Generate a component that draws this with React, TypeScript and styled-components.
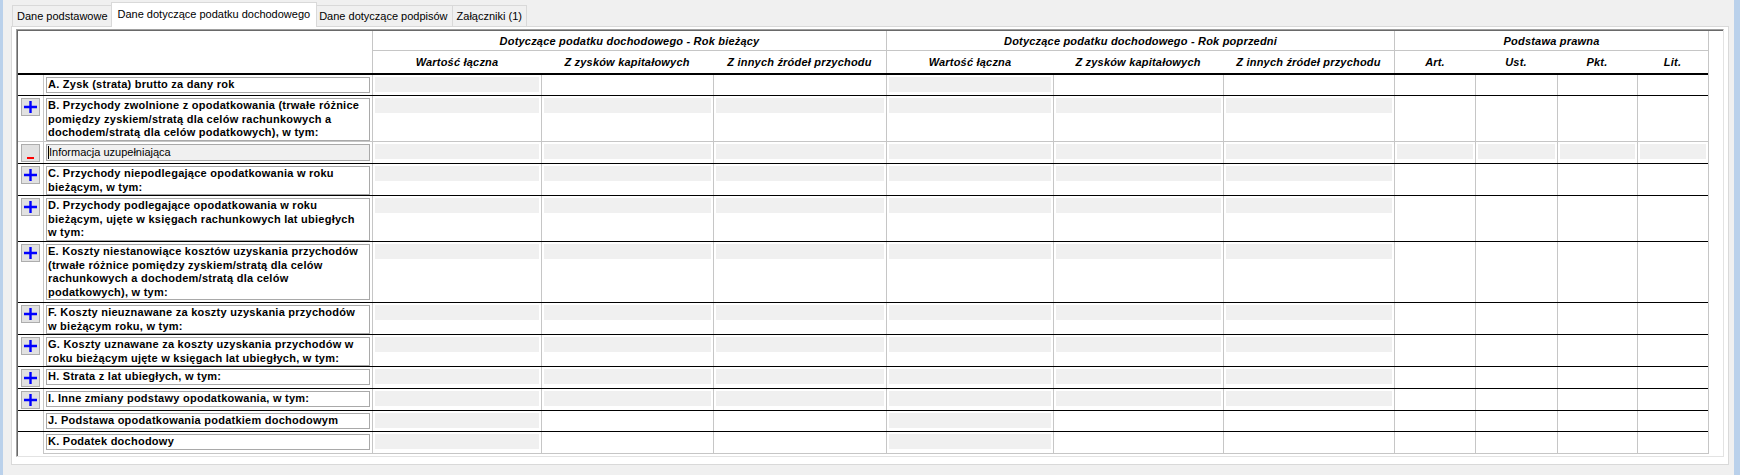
import * as React from "react";
import styled, {createGlobalStyle, css} from "styled-components";

const FONT = `"Liberation Sans", Arial, sans-serif`;
const GRID = "#c6c6c6";
const COLS = "25px 329px 169px 172px 173px 167px 170px 171px 81px 82px 80px 71px";

const GlobalStyle = createGlobalStyle`
	*, *::before, *::after {
		box-sizing: border-box;
	}
	html, body {
		margin: 0;
		height: 475px;
		overflow: hidden;
		background: #f0f0f0;
		font-family: ${FONT};
		font-size: 11px;
		color: #000;
	}
`;

const Window = styled.div`
	display: flex;
	height: 475px;
	background: #f0f0f0;
`;

const Edge = styled.div<{$w: number}>`
	flex: none;
	width: ${(p) => p.$w}px;
	background: #bad1eb;
`;

const Content = styled.div`
	flex: 1;
	padding: 0 5px 0 8px;
`;

const TabBar = styled.div`
	display: flex;
	align-items: flex-end;
	height: 26px;
	padding-left: 2px;
`;

const Tab = styled.div<{$active?: boolean}>`
	height: 21px;
	padding: 0 4px;
	margin-left: -1px;
	border: 1px solid #d9d9d9;
	border-bottom: none;
	background: #f0f0f0;
	display: flex;
	align-items: center;
	white-space: nowrap;
	font-size: 11px;
	${(props) => props.$active && css`
		position: relative;
		z-index: 1;
		height: 25px;
		padding: 0 6px;
		margin: 0 -2px -1px -2px;
		background: #fff;
		padding-bottom: 2px;
	`}
`;

const Panel = styled.div`
	width: 1718px;
	height: 439px;
	border: 1px solid #d9d9d9;
	background: #fff;
	padding: 2px 4px 7px 4px;
`;

const Viewport = styled.div`
	height: 428px;
	border: 1px solid;
	border-color: #a0a0a0 #e3e3e3 #e3e3e3 #a0a0a0;
	box-shadow: inset 1px 1px 0 #696969;
	padding: 1px 0 0 1px;
	background: #fff;
	overflow: hidden;
`;

const Table = styled.div`
	width: 1691px;
	border-right: 1px solid ${GRID};
`;

const HeaderGrid = styled.div`
	display: grid;
	grid-template-columns: ${COLS};
	grid-template-rows: 20px 22px;
	border-bottom: 2px solid #000;
`;

const Corner = styled.div`
	grid-column: 1 / 3;
	grid-row: 1 / 3;
`;

const headText = css`
	display: flex;
	align-items: center;
	justify-content: center;
	font-style: italic;
	font-weight: 700;
	font-size: 11px;
	letter-spacing: 0.2px;
	white-space: nowrap;
`;

const GroupTitle = styled.div<{$from: number; $to: number}>`
	${headText};
	grid-row: 1;
	grid-column: ${(p) => p.$from} / ${(p) => p.$to};
	border-left: 1px solid ${GRID};
	border-bottom: 1px solid ${GRID};
`;

const SubTitle = styled.div<{$col: number; $first: boolean}>`
	${headText};
	grid-row: 2;
	grid-column: ${(p) => p.$col};
	border-left: ${(p) => (p.$first ? `1px solid ${GRID}` : "none")};
`;

const BodyRow = styled.div<{$h: number; $line: string}>`
	display: grid;
	grid-template-columns: ${COLS};
	height: ${(p) => p.$h}px;
	border-bottom: ${(p) => (p.$line === "none" ? "none" : `1px solid ${p.$line}`)};
`;

const ButtonCell = styled.div`
	padding: 2px 0 0 3px;
`;

const LabelCell = styled.div`
	border-left: 1px solid ${GRID};
	padding: 2px 2px 0 2px;
`;

const LabelBox = styled.div<{$info?: boolean}>`
	border: 1px solid #a9a9a9;
	background: #fff;
	padding: 0 1px;
	font-weight: 700;
	font-size: 11px;
	letter-spacing: 0.25px;
	line-height: 13.5px;
	white-space: pre;
	overflow: hidden;
	${(props) => props.$info && css`
		height: 17px;
		line-height: 15px;
		background: #f0f0f0;
		font-weight: 400;
		letter-spacing: 0;
	`}
`;

const Caret = styled.span`
	display: inline-block;
	width: 1px;
	height: 13px;
	background: #000;
	vertical-align: -3px;
`;

const ValueCell = styled.div`
	border-left: 1px solid ${GRID};
	padding: 2px 2px 0 2px;
`;

const InputField = styled.div`
	height: 15px;
	background: #f0f0f0;
`;

const ToggleButton = styled.div`
	width: 19px;
	height: 18px;
	border: 1px solid #adadad;
	background: #e1e1e1;
	display: flex;
	align-items: center;
	justify-content: center;
`;

const MinusButton = styled(ToggleButton)`
	align-items: flex-end;
	padding-bottom: 2px;
`;

const MinusBar = styled.div`
	width: 7px;
	height: 2px;
	background: #f00;
`;

const TableFoot = styled.div`
	margin-left: 25px;
	border-top: 1px solid ${GRID};
`;

const PlusButton = () => (
	<ToggleButton>
		<svg width="13" height="12" viewBox="0 0 13 12">
			<path d="M0 6H13M6.5 0V12" stroke="#0000ff" strokeWidth="2.4" fill="none"/>
		</svg>
	</ToggleButton>
);

interface IRow {
	label: string;
	h: number;
	btn?: "plus" | "minus";
	info?: boolean;
	line: string;
	fields: boolean[];
}

const FIRST = [true, false, false, true, false, false, false, false, false, false];
const SIX = [true, true, true, true, true, true, false, false, false, false];
const ALL = [true, true, true, true, true, true, true, true, true, true];

const rows: IRow[] = [
	{label: "A. Zysk (strata) brutto za dany rok", h: 21, line: "#000", fields: FIRST},
	{
		label: "B. Przychody zwolnione z opodatkowania (trwałe różnice\npomiędzy zyskiem/stratą dla celów rachunkowych a\ndochodem/stratą dla celów podatkowych), w tym:",
		h: 46, btn: "plus", line: GRID, fields: SIX,
	},
	{label: "Informacja uzupełniająca", h: 22, btn: "minus", info: true, line: "#000", fields: ALL},
	{label: "C. Przychody niepodlegające opodatkowania w roku\nbieżącym, w tym:", h: 32, btn: "plus", line: "#000", fields: SIX},
	{
		label: "D. Przychody podlegające opodatkowania w roku\nbieżącym, ujęte w księgach rachunkowych lat ubiegłych\nw tym:",
		h: 46, btn: "plus", line: "#000", fields: SIX,
	},
	{
		label: "E. Koszty niestanowiące kosztów uzyskania przychodów\n(trwałe różnice pomiędzy zyskiem/stratą dla celów\nrachunkowych a dochodem/stratą dla celów\npodatkowych), w tym:",
		h: 61, btn: "plus", line: "#000", fields: SIX,
	},
	{label: "F. Koszty nieuznawane za koszty uzyskania przychodów\nw bieżącym roku, w tym:", h: 32, btn: "plus", line: "#000", fields: SIX},
	{label: "G. Koszty uznawane za koszty uzyskania przychodów w\nroku bieżącym ujęte w księgach lat ubiegłych, w tym:", h: 32, btn: "plus", line: "#000", fields: SIX},
	{label: "H. Strata z lat ubiegłych, w tym:", h: 22, btn: "plus", line: "#000", fields: SIX},
	{label: "I. Inne zmiany podstawy opodatkowania, w tym:", h: 22, btn: "plus", line: "#000", fields: SIX},
	{label: "J. Podstawa opodatkowania podatkiem dochodowym", h: 21, line: "#000", fields: FIRST},
	{label: "K. Podatek dochodowy", h: 21, line: "none", fields: FIRST},
];

const groups = [
	{title: "Dotyczące podatku dochodowego - Rok bieżący", from: 3, subs: ["Wartość łączna", "Z zysków kapitałowych", "Z innych źródeł przychodu"]},
	{title: "Dotyczące podatku dochodowego - Rok poprzedni", from: 6, subs: ["Wartość łączna", "Z zysków kapitałowych", "Z innych źródeł przychodu"]},
	{title: "Podstawa prawna", from: 9, subs: ["Art.", "Ust.", "Pkt.", "Lit."]},
];

const tabs = ["Dane podstawowe", "Dane dotyczące podatku dochodowego", "Dane dotyczące podpisów", "Załączniki (1)"];

export const App = () => {
	return (
		<Window>
			<GlobalStyle/>
			<Edge $w={3}/>
			<Content>
				<TabBar>
					{tabs.map((tab, i) => (
						<Tab key={tab} $active={i === 1}>{tab}</Tab>
					))}
				</TabBar>
				<Panel>
					<Viewport>
						<Table>
							<HeaderGrid>
								<Corner/>
								{groups.map((group) => (
									<React.Fragment key={group.title}>
										<GroupTitle $from={group.from} $to={group.from + group.subs.length}>
											{group.title}
										</GroupTitle>
										{group.subs.map((sub, i) => (
											<SubTitle key={sub} $col={group.from + i} $first={i === 0}>{sub}</SubTitle>
										))}
									</React.Fragment>
								))}
							</HeaderGrid>

							{rows.map((row) => (
								<BodyRow key={row.label} $h={row.h} $line={row.line}>
									<ButtonCell>
										{row.btn === "plus" && <PlusButton/>}
										{row.btn === "minus" && (
											<MinusButton>
												<MinusBar/>
											</MinusButton>
										)}
									</ButtonCell>
									<LabelCell>
										<LabelBox $info={row.info}>
											{row.info && <Caret/>}
											{row.label}
										</LabelBox>
									</LabelCell>
									{row.fields.map((on, i) => (
										<ValueCell key={i}>{on && <InputField/>}</ValueCell>
									))}
								</BodyRow>
							))}
							<TableFoot/>
						</Table>
					</Viewport>
				</Panel>
			</Content>
			<Edge $w={6}/>
		</Window>
	);
};

export default App;
